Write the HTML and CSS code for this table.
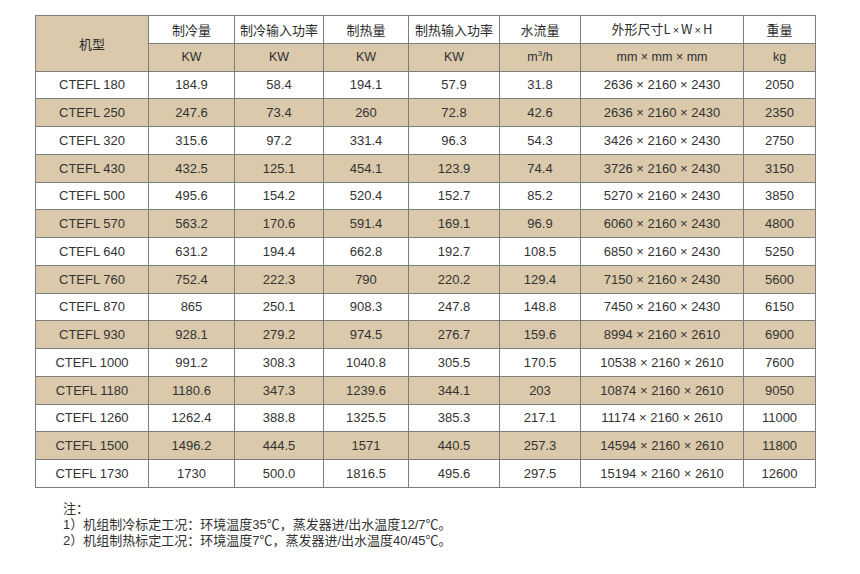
FILE: index.html
```html
<!DOCTYPE html>
<html lang="zh">
<head>
<meta charset="utf-8">
<title>CTEFL</title>
<link rel="stylesheet" href="styles.css">
</head>
<body>
<div class="page">
<table class="spec">
<colgroup>
<col class="c-model"><col class="c-cool"><col class="c-coolin"><col class="c-heat"><col class="c-heatin"><col class="c-flow"><col class="c-size"><col class="c-weight">
</colgroup>
<thead>
<tr class="h1">
<th rowspan="2" class="tan">机型</th>
<th>制冷量</th><th>制冷输入功率</th><th>制热量</th><th>制热输入功率</th><th>水流量</th><th>外形尺寸L<span class="x">×</span>W<span class="x">×</span>H</th><th>重量</th>
</tr>
<tr class="tan">
<th>KW</th><th>KW</th><th>KW</th><th>KW</th><th>m<sup>3</sup>/h</th><th>mm × mm × mm</th><th>kg</th>
</tr>
</thead>
<tbody>
<tr><td>CTEFL 180</td><td>184.9</td><td>58.4</td><td>194.1</td><td>57.9</td><td>31.8</td><td>2636 × 2160 × 2430</td><td>2050</td></tr>
<tr class="tan"><td>CTEFL 250</td><td>247.6</td><td>73.4</td><td>260</td><td>72.8</td><td>42.6</td><td>2636 × 2160 × 2430</td><td>2350</td></tr>
<tr><td>CTEFL 320</td><td>315.6</td><td>97.2</td><td>331.4</td><td>96.3</td><td>54.3</td><td>3426 × 2160 × 2430</td><td>2750</td></tr>
<tr class="tan"><td>CTEFL 430</td><td>432.5</td><td>125.1</td><td>454.1</td><td>123.9</td><td>74.4</td><td>3726 × 2160 × 2430</td><td>3150</td></tr>
<tr><td>CTEFL 500</td><td>495.6</td><td>154.2</td><td>520.4</td><td>152.7</td><td>85.2</td><td>5270 × 2160 × 2430</td><td>3850</td></tr>
<tr class="tan"><td>CTEFL 570</td><td>563.2</td><td>170.6</td><td>591.4</td><td>169.1</td><td>96.9</td><td>6060 × 2160 × 2430</td><td>4800</td></tr>
<tr><td>CTEFL 640</td><td>631.2</td><td>194.4</td><td>662.8</td><td>192.7</td><td>108.5</td><td>6850 × 2160 × 2430</td><td>5250</td></tr>
<tr class="tan"><td>CTEFL 760</td><td>752.4</td><td>222.3</td><td>790</td><td>220.2</td><td>129.4</td><td>7150 × 2160 × 2430</td><td>5600</td></tr>
<tr><td>CTEFL 870</td><td>865</td><td>250.1</td><td>908.3</td><td>247.8</td><td>148.8</td><td>7450 × 2160 × 2430</td><td>6150</td></tr>
<tr class="tan"><td>CTEFL 930</td><td>928.1</td><td>279.2</td><td>974.5</td><td>276.7</td><td>159.6</td><td>8994 × 2160 × 2610</td><td>6900</td></tr>
<tr><td>CTEFL 1000</td><td>991.2</td><td>308.3</td><td>1040.8</td><td>305.5</td><td>170.5</td><td>10538 × 2160 × 2610</td><td>7600</td></tr>
<tr class="tan"><td>CTEFL 1180</td><td>1180.6</td><td>347.3</td><td>1239.6</td><td>344.1</td><td>203</td><td>10874 × 2160 × 2610</td><td>9050</td></tr>
<tr><td>CTEFL 1260</td><td>1262.4</td><td>388.8</td><td>1325.5</td><td>385.3</td><td>217.1</td><td>11174 × 2160 × 2610</td><td>11000</td></tr>
<tr class="tan"><td>CTEFL 1500</td><td>1496.2</td><td>444.5</td><td>1571</td><td>440.5</td><td>257.3</td><td>14594 × 2160 × 2610</td><td>11800</td></tr>
<tr><td>CTEFL 1730</td><td>1730</td><td>500.0</td><td>1816.5</td><td>495.6</td><td>297.5</td><td>15194 × 2160 × 2610</td><td>12600</td></tr>
</tbody>
</table>
<div class="notes">
<p>注：</p>
<p>1）机组制冷标定工况：环境温度35℃，蒸发器进/出水温度12/7℃。</p>
<p>2）机组制热标定工况：环境温度7℃，蒸发器进/出水温度40/45℃。</p>
</div>
</div>
</body>
</html>
```
FILE: styles.css
```css
html, body {
  margin: 0;
  padding: 0;
  background: #ffffff;
}
.page {
  padding: 15px 0 0 35px;
  font-family: "Liberation Sans", "Noto Sans CJK SC", sans-serif;
  color: #333333;
}
.spec {
  border-collapse: collapse;
  table-layout: fixed;
  width: 781px;
  font-size: 13px;
}
.c-model { width: 113px; }
.c-cool { width: 86px; }
.c-coolin { width: 89px; }
.c-heat { width: 85px; }
.c-heatin { width: 91px; }
.c-flow { width: 81px; }
.c-size { width: 163px; }
.c-weight { width: 72px; }
.spec th, .spec td {
  border: 1px solid #7d7d7d;
  text-align: center;
  vertical-align: middle;
  padding: 0;
  font-weight: normal;
  white-space: nowrap;
  line-height: 15px;
}
.spec tr {
  height: 27.75px;
}
.spec th {
  font-family: "Noto Sans CJK SC", "Liberation Sans", sans-serif;
  color: #2e2e2e;
}
.spec .h1 th {
  font-size: 13px;
}
.spec tr.tan th {
  font-family: "Liberation Sans", "Noto Sans CJK SC", sans-serif;
  font-size: 12.5px;
}
.tan, .tan th, .tan td, th.tan {
  background: #dacaab;
}
.x {
  font-family: "Liberation Sans", sans-serif;
  font-size: 11px;
  margin: 0 2px;
}
sup {
  font-size: 8px;
  line-height: 0;
}
.notes {
  margin: 13px 0 0 28px;
  font-family: "Liberation Sans", "Noto Sans CJK SC", sans-serif;
  font-size: 13px;
  color: #333333;
}
.notes p {
  margin: 0;
  line-height: 16px;
}
```
